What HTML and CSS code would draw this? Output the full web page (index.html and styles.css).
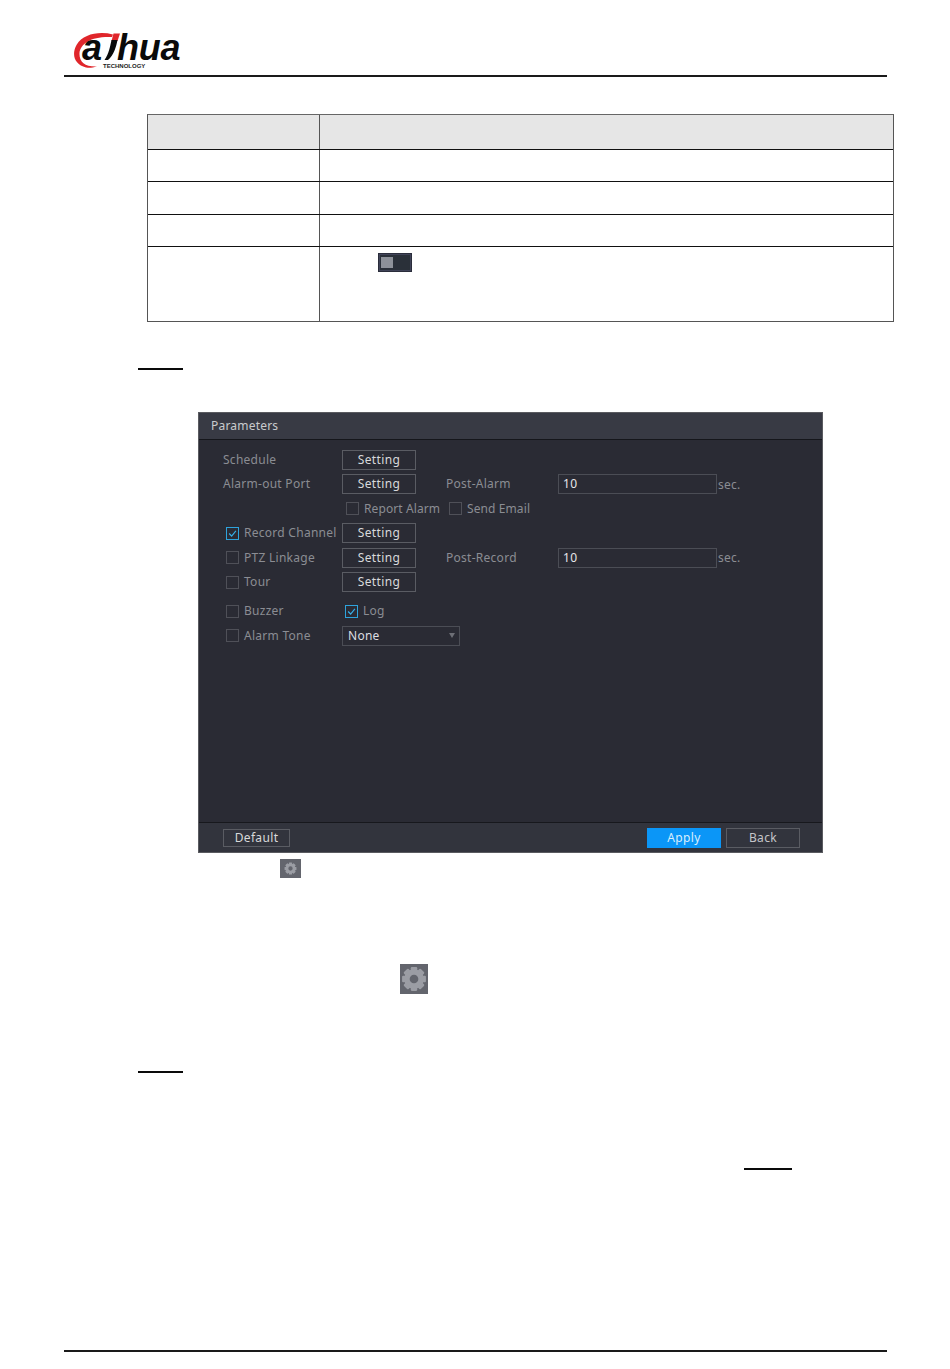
FILE: index.html
```html
<!DOCTYPE html>
<html lang="en">
<head>
<meta charset="utf-8">
<title>Parameters</title>
<link rel="stylesheet" href="styles.css">
</head>
<body>
<svg class="defs" width="0" height="0" aria-hidden="true">
  <symbol id="gear" viewBox="0 0 24 24">
    <g class="gear-teeth">
      <rect x="9" y="1" width="6" height="22" rx="1"/>
      <rect x="9" y="1" width="6" height="22" rx="1" transform="rotate(45 12 12)"/>
      <rect x="9" y="1" width="6" height="22" rx="1" transform="rotate(90 12 12)"/>
      <rect x="9" y="1" width="6" height="22" rx="1" transform="rotate(135 12 12)"/>
    </g>
    <circle class="gear-ring" cx="12" cy="12" r="6.500"/>
  </symbol>
</svg>
<div class="page">
  <header class="doc-header">
    <svg class="logo" width="112" height="48" viewBox="0 -8 112 48">
      <path class="logo-red" d="M41 3.500C27 0 11 3 4.500 14 -1 24 3 34 14 36.500 17 37 20 37 25 35.500 13 36 7 31 7.500 22 8.500 12 20 5 40 6Z"/>
      <path class="logo-red" d="M41.500 2.500H48L45.500 10H39.500Z"/>
      <path class="logo-black" d="M45.500 9H39.500C38 16 37 22 32.500 29H36C42 24 44 16 45.500 9Z"/>
      <text class="logo-word" x="10" y="29">a</text>
      <text class="logo-word" x="45" y="29">hua</text>
      <text class="logo-sub" x="31" y="36.500">TECHNOLOGY</text>
    </svg>
  </header>

  <div class="spec-table">
    <div class="spec-row spec-head"><div class="spec-name"></div><div class="spec-text"></div></div>
    <div class="spec-row spec-r32"><div class="spec-name"></div><div class="spec-text"></div></div>
    <div class="spec-row spec-r33"><div class="spec-name"></div><div class="spec-text"></div></div>
    <div class="spec-row spec-r32"><div class="spec-name"></div><div class="spec-text"></div></div>
    <div class="spec-row spec-last">
      <div class="spec-name"></div>
      <div class="spec-text spec-switch-cell">
        <span class="switch"><span class="switch-track"><span class="switch-knob"></span></span></span>
      </div>
    </div>
  </div>

  <div class="step-rule step-rule-a"></div>

  <section class="panel">
    <div class="panel-title">Parameters</div>
    <div class="panel-body">
      <div class="form-row">
        <span class="lbl col-a">Schedule</span>
        <button class="btn">Setting</button>
      </div>
      <div class="form-row">
        <span class="lbl col-a">Alarm-out Port</span>
        <button class="btn">Setting</button>
        <span class="lbl col-c">Post-Alarm</span>
        <span class="field">10</span>
        <span class="unit">sec.</span>
      </div>
      <div class="form-row row-checks">
        <span class="check"></span><span class="lbl lbl-report">Report Alarm</span>
        <span class="check"></span><span class="lbl">Send Email</span>
      </div>
      <div class="form-row row-inset">
        <span class="check on"><svg viewBox="0 0 13 13" width="11" height="11"><path d="M2.500 6.500 5.500 9.500 10.500 3.500"/></svg></span>
        <span class="lbl col-b">Record Channel</span>
        <button class="btn">Setting</button>
      </div>
      <div class="form-row row-inset">
        <span class="check"></span>
        <span class="lbl col-b">PTZ Linkage</span>
        <button class="btn">Setting</button>
        <span class="lbl col-c">Post-Record</span>
        <span class="field">10</span>
        <span class="unit">sec.</span>
      </div>
      <div class="form-row row-inset">
        <span class="check"></span>
        <span class="lbl col-b">Tour</span>
        <button class="btn">Setting</button>
      </div>
      <div class="form-row row-inset row-gap">
        <span class="check"></span>
        <span class="lbl col-b">Buzzer</span>
        <span class="log-wrap">
          <span class="check on"><svg viewBox="0 0 13 13" width="11" height="11"><path d="M2.500 6.500 5.500 9.500 10.500 3.500"/></svg></span>
          <span class="lbl">Log</span>
        </span>
      </div>
      <div class="form-row row-inset">
        <span class="check"></span>
        <span class="lbl col-b">Alarm Tone</span>
        <span class="select">None<span class="caret"></span></span>
      </div>
    </div>
    <div class="panel-foot">
      <button class="btn btn-default">Default</button>
      <div class="foot-right">
        <button class="btn btn-apply">Apply</button>
        <button class="btn btn-back">Back</button>
      </div>
    </div>
  </section>

  <div class="gear-chip gear-small"><svg width="13" height="13"><use href="#gear"/></svg></div>
  <div class="gear-chip gear-large"><svg width="26" height="26"><use href="#gear"/></svg></div>

  <div class="step-rule step-rule-b"></div>
  <div class="step-rule step-rule-c"></div>

  <footer class="doc-footer"></footer>
</div>
</body>
</html>
```
FILE: styles.css
```css
* { box-sizing: border-box; }
html, body { margin: 0; padding: 0; background: #fff; }
body { font-family: "Noto Sans", "Liberation Sans", sans-serif; }
.defs { display: block; height: 0; }
.page { width: 950px; height: 1369px; overflow: hidden; }

.doc-header {
  height: 77px;
  margin: 0 63px 0 64px;
  padding: 23px 0 0 8px;
  border-bottom: 2px solid #1a1a1a;
}
.logo { display: block; }
.logo-red { fill: #e0262b; }
.logo-black { fill: #0a0a0a; }
.logo-word { font: italic 700 36px "Liberation Sans", sans-serif; fill: #0a0a0a; letter-spacing: -.2px; }
.logo-sub { font: 700 6px "Liberation Sans", sans-serif; fill: #222; }

.spec-table {
  width: 747px;
  margin: 37px 0 0 147px;
  border: 1px solid #555;
  border-top-color: #666;
}
.spec-row { display: grid; grid-template-columns: 172px 1fr; border-bottom: 1px solid #111; }
.spec-row:last-child { border-bottom: 0; }
.spec-name { border-right: 1px solid #555; }
.spec-head { height: 35px; background: #e6e6e6; }
.spec-r32 { height: 32px; }
.spec-r33 { height: 33px; }
.spec-last { height: 74px; }
.spec-switch-cell { padding: 6px 0 0 58px; }

.switch {
  display: block;
  width: 34px;
  height: 19px;
  padding: 1px;
  background: #2a2d3b;
}
.switch-track {
  display: block;
  height: 17px;
  padding: 2px 1px;
  background: #2a3039;
  border: 1px solid #404358;
}
.switch-knob { display: block; width: 12px; height: 11px; background: #8d9199; }

.step-rule { height: 2px; background: #0a0a0a; }
.step-rule-a { width: 45px; margin: 46px 0 0 138px; }
.step-rule-b { width: 45px; margin: 77px 0 0 138px; }
.step-rule-c { width: 48px; margin: 95px 0 0 744px; }

.panel {
  width: 625px;
  height: 441px;
  margin: 42px 0 0 198px;
  display: flex;
  flex-direction: column;
  background: #2a2b34;
  border: 1px solid #5a5b60;
  color: #8b8d93;
  font-size: 12px;
  letter-spacing: .27px;
}
.panel-title {
  height: 27px;
  flex: none;
  padding-left: 12px;
  line-height: 25px;
  background: #383a44;
  border-bottom: 1px solid #15161b;
  color: #c9cacd;
  letter-spacing: .2px;
}
.panel-body { flex: 1; padding: 9.750px 0 0 24px; }
.form-row { display: flex; align-items: center; height: 20px; margin-bottom: 4.500px; white-space: nowrap; }
.row-checks { padding-left: 123px; letter-spacing: .1px; }
.row-inset { padding-left: 3px; }
.row-gap { margin-top: 9px; }

.lbl { display: block; line-height: 20px; }
.col-a { width: 119px; }
.col-b { width: 98px; margin-left: 5px; }
.col-c { width: 112px; margin-left: 30px; }
.lbl-report { width: 85px; }
.row-checks .lbl { margin-left: 5px; }

.check {
  display: flex;
  align-items: center;
  justify-content: center;
  width: 13px;
  height: 13px;
  flex: none;
  border: 1px solid #4f5058;
}
.check.on { border-color: #2ea3dc; }
.check svg { display: block; fill: none; stroke: #35aee8; stroke-width: 1.400px; }
.log-wrap { display: flex; align-items: center; margin-left: 3px; }
.log-wrap .lbl { margin-left: 5px; }

.btn {
  display: block;
  width: 74px;
  height: 20px;
  padding: 0;
  flex: none;
  font: inherit;
  line-height: 18px;
  letter-spacing: .35px;
  color: #d8d9db;
  background: transparent;
  border: 1px solid #5a5c63;
}
.field {
  display: block;
  width: 159px;
  height: 20px;
  padding-left: 4px;
  line-height: 18px;
  color: #e6e6e8;
  border: 1px solid #4b4d55;
}
.unit { margin-left: 1px; }
.select {
  display: flex;
  align-items: center;
  justify-content: space-between;
  width: 118px;
  height: 20px;
  padding: 0 4px 0 5px;
  color: #dcdde0;
  border: 1px solid #4b4d55;
}
.caret { width: 0; height: 0; border: 3.500px solid transparent; border-top: 5px solid #6d6f76; border-bottom: 0; }

.panel-foot {
  flex: none;
  height: 30px;
  padding: 5px 22px 0 24px;
  display: flex;
  justify-content: space-between;
  background: #32343d;
  border-top: 1px solid #17181d;
}
.foot-right { display: flex; gap: 5px; }
.btn-default { width: 67px; height: 18px; margin-top: 1px; line-height: 16px; }
.btn-apply { background: #0b96f7; border-color: #0b96f7; color: #d8eefd; }
.btn-back { color: #c4c5c9; }

.gear-chip { display: flex; align-items: center; justify-content: center; background: #63656d; }
.gear-chip use, .gear-chip svg { display: block; }
.gear-teeth { fill: #9b9da4; }
.gear-ring { fill: #63656d; stroke: #9b9da4; stroke-width: 5; }
.gear-small { width: 21px; height: 19px; margin: 6px 0 0 280px; }
.gear-large { width: 28px; height: 30px; margin: 86px 0 0 400px; }

.doc-footer { margin: 180px 63px 0 64px; border-top: 2px solid #1a1a1a; }
```
